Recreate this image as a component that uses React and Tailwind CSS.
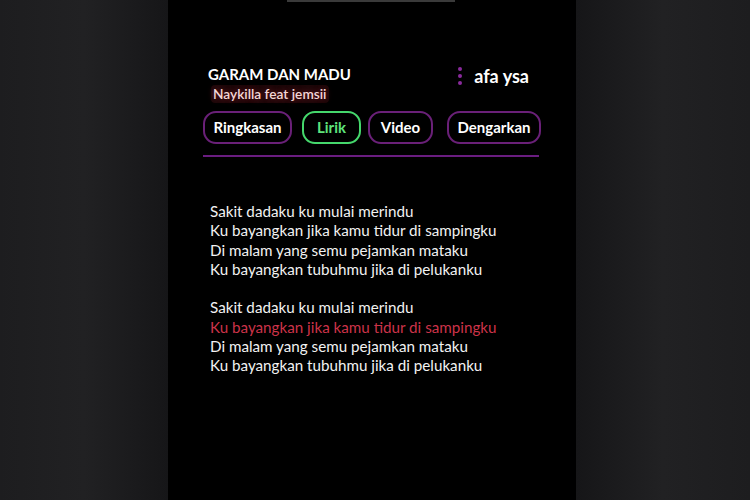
export default function App() {
  const stanza = [
    "Sakit dadaku ku mulai merindu",
    "Ku bayangkan jika kamu tidur di sampingku",
    "Di malam yang semu pejamkan mataku",
    "Ku bayangkan tubuhmu jika di pelukanku",
  ];
  const font = { fontFamily: "Lato, 'Open Sans', sans-serif" };
  return (
    <div className="w-[750px] h-[500px] flex bg-[#1e1e20] overflow-hidden" style={font}>
      <div className="w-[168px] h-full bg-gradient-to-r from-[#1d1d1f] via-[#212123] to-[#161618]" />
      <div className="w-[408px] h-full bg-black relative flex flex-col">
        <div className="absolute top-0 left-[119px] w-[168px] h-[2px] bg-[#3a3a3a]" />
        <div className="pt-[64px] pl-[40px] pr-[47px] flex justify-between items-start">
          <div className="flex flex-col">
            <div className="text-[15px] leading-[20px] font-bold text-white">GARAM DAN MADU</div>
            <div className="mt-[1px] ml-[3px] px-[2px] text-[13.7px] leading-[18px] font-semibold text-[#f3d6d6] bg-[#1c0709] [text-shadow:0_0_6px_#7a1a24] rounded-sm w-fit">
              Naykilla feat jemsii
            </div>
          </div>
          <div className="flex items-center gap-[12px] mt-[1px]">
            <div className="flex flex-col gap-[3px]">
              <span className="w-[4px] h-[4px] rounded-full bg-[#8a2a9c]" />
              <span className="w-[4px] h-[4px] rounded-full bg-[#8a2a9c]" />
              <span className="w-[4px] h-[4px] rounded-full bg-[#8a2a9c]" />
            </div>
            <span className="text-[18px] font-bold text-white leading-[22px]">afa ysa</span>
          </div>
        </div>
        <div className="mt-[8px] pl-[35px] flex items-center">
          <div className="w-[89px] h-[33px] rounded-[13px] border-2 border-[#6a2078] flex items-center justify-center text-[15px] font-bold text-white">Ringkasan</div>
          <div className="ml-[10px] w-[59px] h-[33px] rounded-[13px] border-2 border-[#45d86c] flex items-center justify-center text-[15px] font-bold text-[#5ee47c]">Lirik</div>
          <div className="ml-[7px] w-[65px] h-[33px] rounded-[13px] border-2 border-[#6a2078] flex items-center justify-center text-[15px] font-bold text-white">Video</div>
          <div className="ml-[14px] w-[94px] h-[33px] rounded-[13px] border-2 border-[#6a2078] flex items-center justify-center text-[15px] font-bold text-white">Dengarkan</div>
        </div>
        <div className="mt-[11px] ml-[35px] w-[336px] h-[2px] bg-[#6a1d80]" />
        <div className="mt-[45px] pl-[42px] flex flex-col text-[15.2px] leading-[19.3px] text-[#f2f2f2]">
          {stanza.map((l) => (
            <div key={"a" + l}>{l}</div>
          ))}
          <div className="h-[19.3px]" />
          {stanza.map((l, i) => (
            <div key={"b" + l} className={i === 1 ? "text-[#cc3349]" : ""}>{l}</div>
          ))}
        </div>
      </div>
      <div className="flex-1 h-full bg-gradient-to-r from-[#161618] via-[#212123] to-[#1d1d1f]" />
    </div>
  );
}
